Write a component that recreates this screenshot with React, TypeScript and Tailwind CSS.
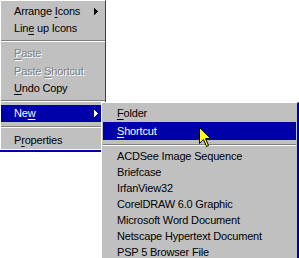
import React from 'react';

const BLUE = 'bg-[#0000a8]';

function Arrow({ white }: { white?: boolean }) {
  return (
    <svg width="4" height="7" viewBox="0 0 4 7" shapeRendering="crispEdges">
      <polygon points="0,0 4,3.5 0,7" fill={white ? '#ffffff' : '#000000'} />
    </svg>
  );
}

function Sep({ top, h }: { top: string; h: string }) {
  return (
    <div className={`${h} ${top} flex flex-col`}>
      <div className="h-px bg-[#808080]" />
      <div className="h-px bg-white" />
    </div>
  );
}

function Row({
  h,
  children,
  active,
  disabled,
  arrow,
  pl = 'pl-[13px]',
}: {
  h: string;
  children: React.ReactNode;
  active?: boolean;
  disabled?: boolean;
  arrow?: boolean;
  pl?: string;
}) {
  let color = 'text-black';
  if (active) color = 'text-white';
  if (disabled) color = 'text-[#808080] [text-shadow:1px_1px_0_#ffffff]';
  return (
    <div className={`${h} ${pl} pr-[7px] flex items-center justify-between ${active ? BLUE : ''} ${color}`}>
      <span className="leading-none whitespace-nowrap">{children}</span>
      {arrow && <Arrow white={active} />}
    </div>
  );
}

function U({ children }: { children: React.ReactNode }) {
  return <span className="underline underline-offset-[2px]">{children}</span>;
}

export default function App() {
  return (
    <div className="relative w-[299px] h-[258px] bg-white overflow-hidden font-['Liberation_Sans',Arial,sans-serif] text-[11px] tracking-[-0.18px]">
      {/* main context menu */}
      <div className="w-[106px]">
        <div className="bg-[#c0c0c0] border-t border-l border-white border-r border-r-[#404040] border-b border-b-white pt-px flex flex-col">
          <Row h="h-[18px]" arrow>
            Arrange <U>I</U>cons
          </Row>
          <Row h="h-[17px]">
            Lin<U>e</U> up Icons
          </Row>
          <Sep h="h-[8px]" top="pt-[3px]" />
          <Row h="h-[17px]" disabled>
            <U>P</U>aste
          </Row>
          <Row h="h-[18px]" disabled>
            Paste <U>S</U>hortcut
          </Row>
          <Row h="h-[17px]">
            <U>U</U>ndo Copy
          </Row>
          <Sep h="h-[8px]" top="pt-[3px]" />
          <Row h="h-[17px]" active arrow>
            Ne<U>w</U>
          </Row>
          <Sep h="h-[9px]" top="pt-[4px]" />
          <Row h="h-[18px]">
            P<U>r</U>operties
          </Row>
        </div>
        <div className={`h-[2px] ${BLUE}`} />
      </div>

      {/* New submenu */}
      <div className="absolute left-[101px] top-[102px] w-[198px] bg-[#c0c0c0] border-t border-l border-white border-r-2 border-r-[#0000a8] pt-[2px] pl-px pr-px flex flex-col">
        <Row h="h-[17px]" pl="pl-[14px]">
          <U>F</U>older
        </Row>
        <Row h="h-[18px]" pl="pl-[14px]" active>
          <U>S</U>hortcut
        </Row>
        <Sep h="h-[8px]" top="pt-[4px]" />
        {[
          'ACDSee Image Sequence',
          'Briefcase',
          'IrfanView32',
          'CorelDRAW 6.0 Graphic',
          'Microsoft Word Document',
          'Netscape Hypertext Document',
          'PSP 5 Browser File',
        ].map((t) => (
          <Row key={t} h="h-[16px]" pl="pl-[14px]">
            {t}
          </Row>
        ))}
      </div>

      {/* mouse pointer */}
      <svg
        className="absolute left-[199px] top-[127px]"
        width="13"
        height="21"
        viewBox="0 0 13 21"
      >
        <polygon
          points="0.5,0.5 0.5,16.5 4.5,12.5 7.5,19.5 9.5,18.5 6.5,11.5 11.5,11.5"
          fill="#ffff00"
          stroke="#000000"
          strokeWidth="1"
          strokeLinejoin="miter"
        />
      </svg>
    </div>
  );
}
